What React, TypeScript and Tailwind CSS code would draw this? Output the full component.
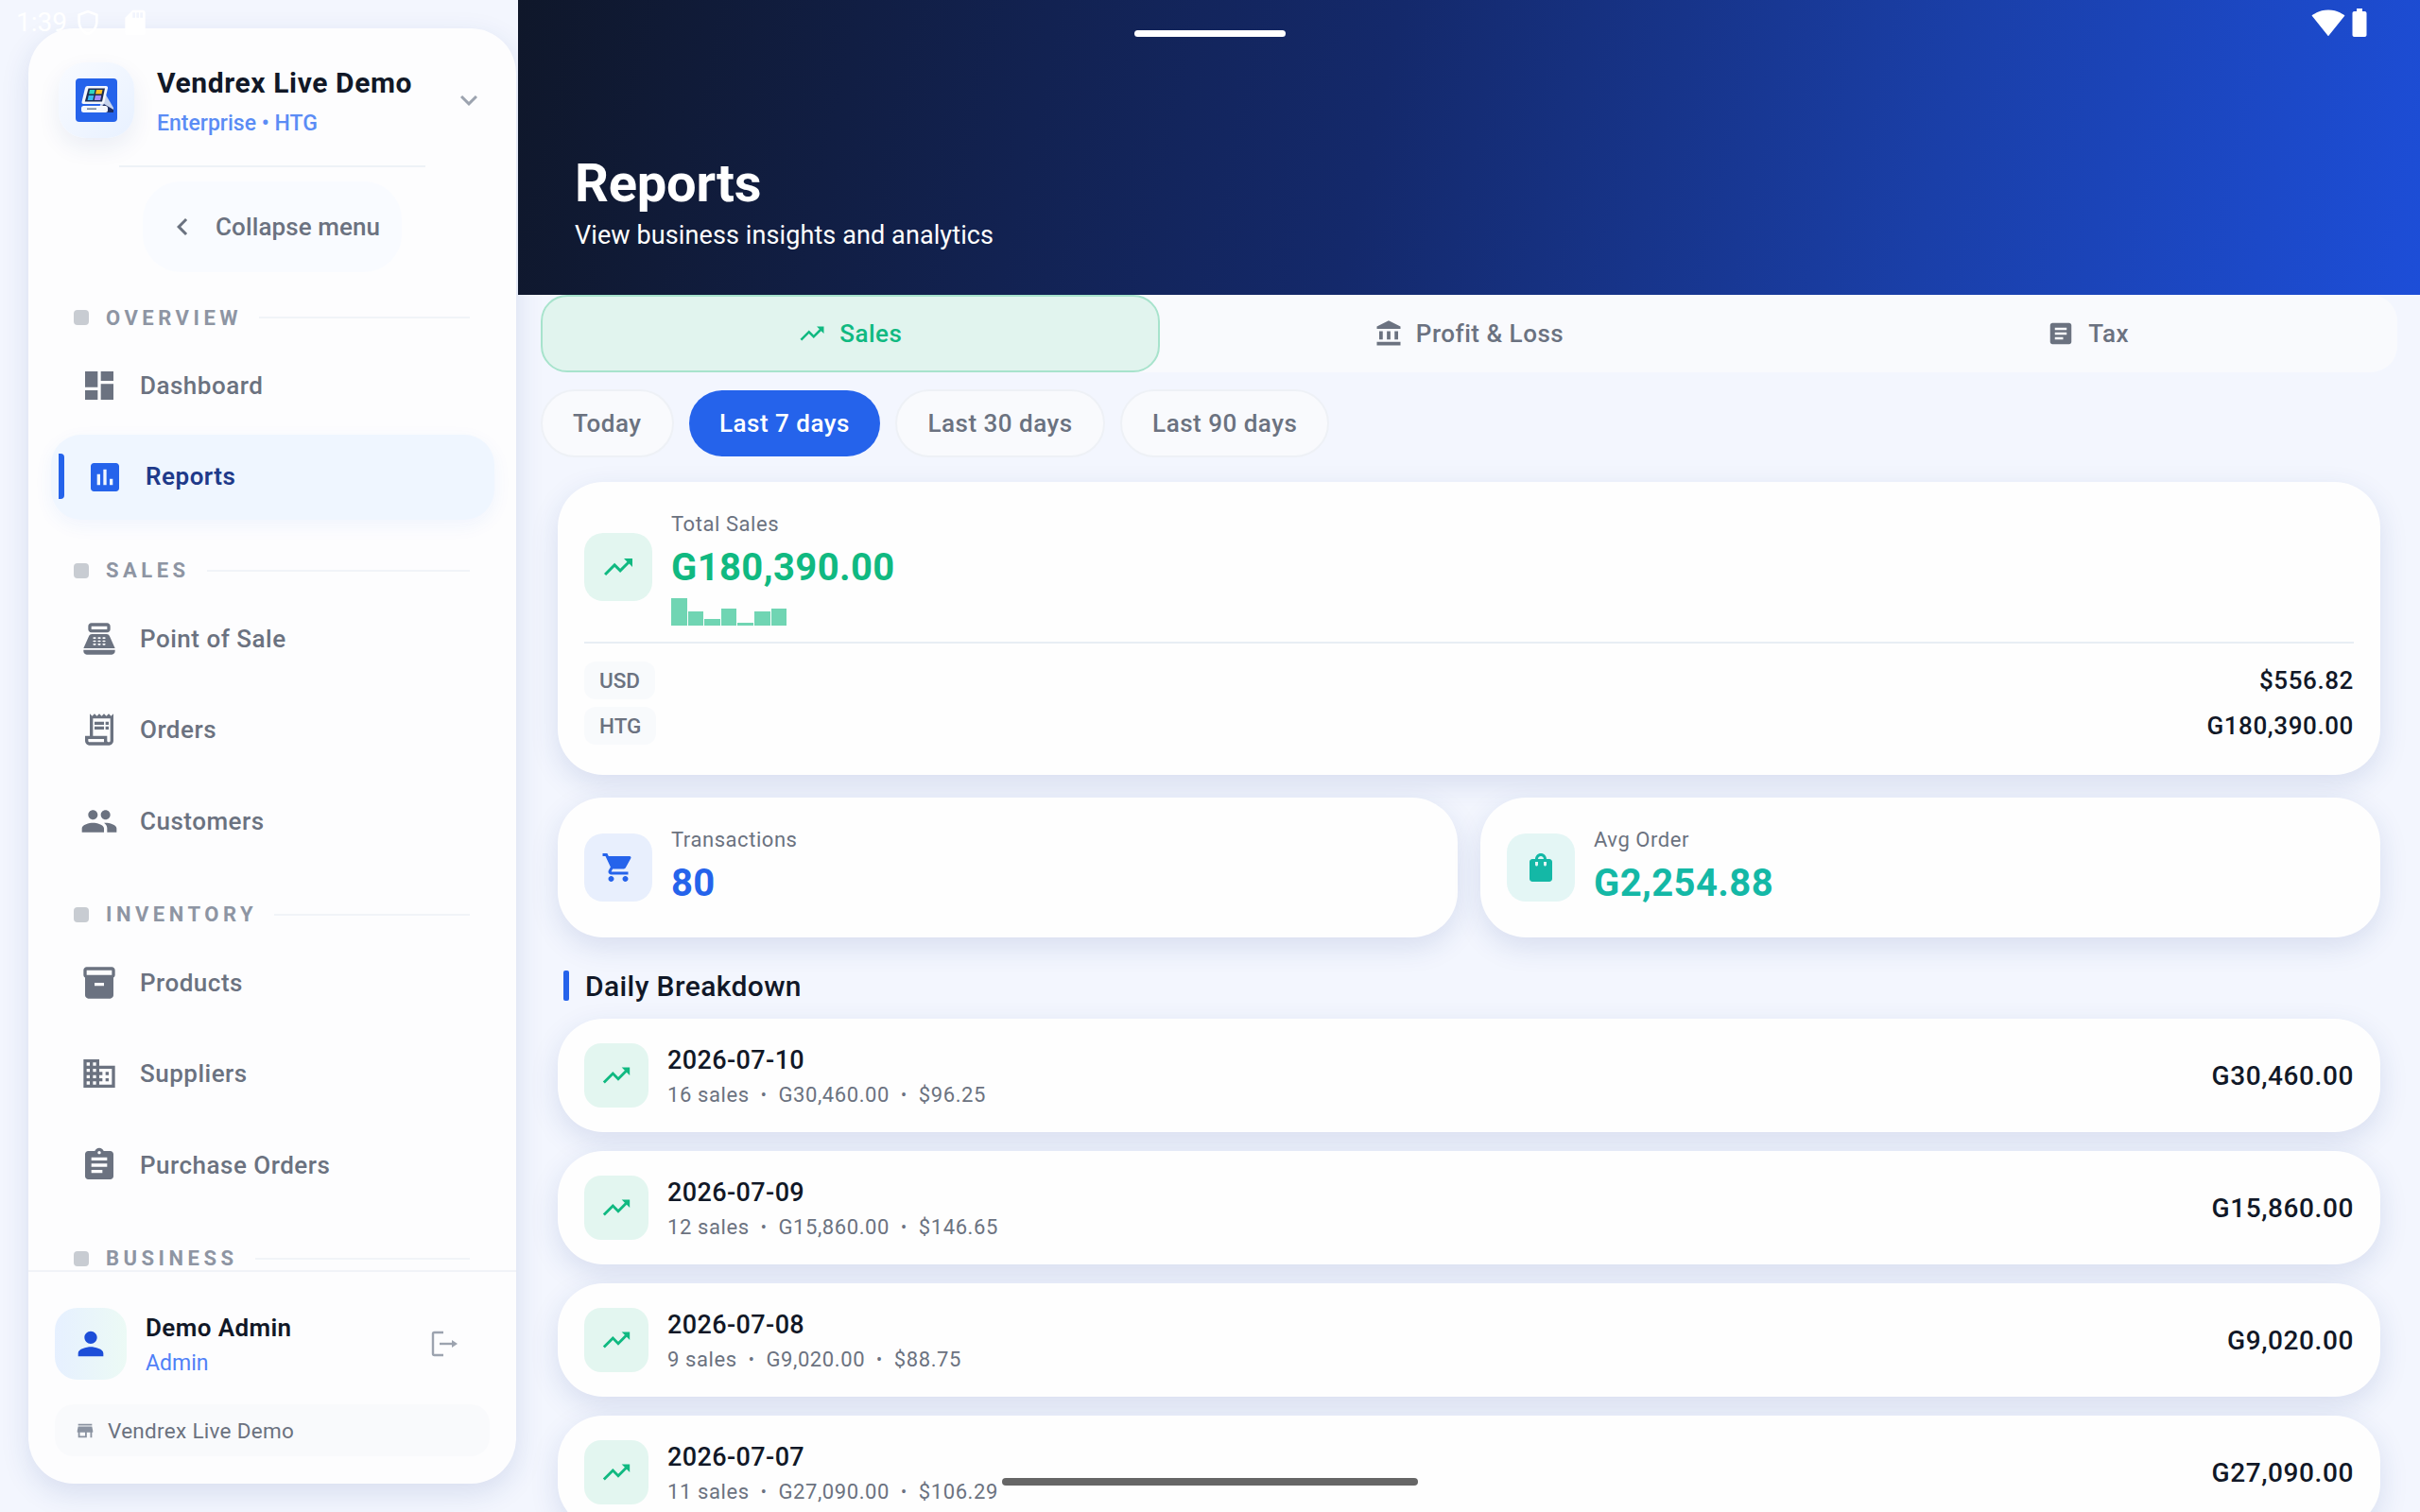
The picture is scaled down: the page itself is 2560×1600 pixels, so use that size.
import React from "react";
import {
  MdDashboard, MdAssessment, MdPointOfSale, MdOutlineReceiptLong, MdPeople, MdInventory2, MdOutlineDomain, MdAssignment,
  MdTrendingUp, MdAccountBalance, MdArticle, MdShoppingCart, MdShoppingBag, MdPerson, MdStore, MdKeyboardArrowDown, MdChevronLeft,
  MdSignalWifi4Bar, MdBatteryFull, MdOutlineShield, MdSdCard,
} from "react-icons/md";

function Logo() {
  return (
    <svg width="44" height="46" viewBox="0 0 44 46">
      <rect width="44" height="46" rx="4" fill="#2563eb" />
      <path d="M30 14 L40 31 L40 35 L24 35 Z" fill="#c7d4ee" />
      <path d="M30 27 L40 33 L40 36 L22 36 Z" fill="#1e2f66" />
      <path d="M12.5 8 H32 Q34.5 8 34 10.5 L30.5 25 Q30 27 28 27 H8.5 Q6 27 6.6 24.5 L10 10 Q10.5 8 12.5 8 Z" fill="#f4f7fd" />
      <path d="M13.5 10.5 H31 L28 24.5 H9.8 Z" fill="#1b2b52" />
      <path d="M15 12 H20.5 L19.6 16.5 H14 Z" fill="#2dd4bf" />
      <path d="M22 12 H28.5 L27.5 16.5 H21 Z" fill="#fbbf24" />
      <path d="M13.7 18 H19.3 L18.3 23 H12.6 Z" fill="#38bdf8" />
      <path d="M20.8 18 H27.2 L26.2 23 H19.8 Z" fill="#a78bfa" />
      <rect x="6" y="29" width="28" height="7" rx="2.5" fill="#f4f7fd" />
      <rect x="12" y="31.5" width="10" height="1.4" fill="#64748b" />
    </svg>
  );
}

const sections = [
  { title: "OVERVIEW", items: [
    { label: "Dashboard", icon: MdDashboard },
    { label: "Reports", icon: MdAssessment, active: true },
  ]},
  { title: "SALES", items: [
    { label: "Point of Sale", icon: MdPointOfSale },
    { label: "Orders", icon: MdOutlineReceiptLong },
    { label: "Customers", icon: MdPeople },
  ]},
  { title: "INVENTORY", items: [
    { label: "Products", icon: MdInventory2 },
    { label: "Suppliers", icon: MdOutlineDomain },
    { label: "Purchase Orders", icon: MdAssignment },
  ]},
  { title: "BUSINESS", items: [] as { label: string; icon: typeof MdPeople; active?: boolean }[] },
];

function NavItem({ label, icon: Icon, active }: { label: string; icon: typeof MdPeople; active?: boolean }) {
  if (active) {
    return (
      <div className="relative ml-[24px] mr-[23px] flex h-[90px] shrink-0 items-center gap-[23px] rounded-[32px] bg-[#eff6ff] pl-[37px] shadow-[0_6px_20px_rgba(37,99,235,0.06)]">
        <div className="absolute left-[8px] top-[20px] h-[48px] w-[6px] rounded-r-[4px] bg-[#2563eb]" />
        <Icon className="text-[#2563eb]" size={40} />
        <span className="text-[26px] font-semibold tracking-[0.5px] text-[#1e3a8a]">{label}</span>
      </div>
    );
  }
  return (
    <div className="ml-[24px] mr-[23px] flex h-[90px] shrink-0 items-center gap-[23px] pl-[31px]">
      <Icon className="text-[#6b7280]" size={40} />
      <span className="mt-[1px] text-[26px] font-medium tracking-[0.5px] text-[#6b7280]">{label}</span>
    </div>
  );
}

function Sidebar() {
  return (
    <div className="w-[548px] shrink-0 pb-[30px] pl-[30px] pr-[2px] pt-[30px]">
      <div className="flex h-full flex-col overflow-hidden rounded-[48px] bg-[#fdfdfe] shadow-[0_10px_30px_rgba(30,58,138,0.13)]">
        <div className="mt-[36px] flex h-[80px] shrink-0 items-center pl-[32px] pr-[32px]">
          <div className="flex h-[80px] w-[80px] shrink-0 items-center justify-center rounded-[28px] bg-gradient-to-br from-[#f9fbff] to-[#e8f1ff] shadow-[0_10px_24px_rgba(30,58,138,0.08)]">
            <Logo />
          </div>
          <div className="ml-[24px] flex-1 pt-[2px]">
            <div className="text-[30px] font-bold leading-[40px] tracking-[0.6px] text-[#111827]">Vendrex Live Demo</div>
            <div className="mt-[7px] text-[23px] font-medium leading-[32px] text-[#5b8cf5]">Enterprise • HTG</div>
          </div>
          <MdKeyboardArrowDown className="text-[#9ca3af]" size={36} />
        </div>
        <div className="mx-[96px] mt-[29px] h-[2px] shrink-0 bg-[#eef2f7]" />
        <div className="mx-auto mt-[15px] flex h-[96px] w-[274px] shrink-0 items-center rounded-[40px] bg-[#f9fbff] pl-[24px]">
          <MdChevronLeft className="text-[#6b7280]" size={36} />
          <span className="ml-[17px] text-[26px] font-medium tracking-[0.1px] text-[#6b7280]">Collapse menu</span>
        </div>
        <div className="mt-[36px] flex min-h-0 flex-1 flex-col overflow-hidden">
          {sections.map((s) => (
            <div key={s.title} className="mb-[42px] flex shrink-0 flex-col">
              <div className="mb-[15px] flex h-[24px] items-center pl-[48px] pr-[49px]">
                <div className="h-[16px] w-[16px] rounded-[4px] bg-[#c8ccd2]" />
                <span className="ml-[18px] text-[22px] font-bold tracking-[4.5px] text-[#8e95a3]">{s.title}</span>
                <div className="ml-[18px] h-[2px] flex-1 bg-[#f1f4f8]" />
              </div>
              <div className="flex flex-col gap-[6.5px]">
                {s.items.map((it) => <NavItem key={it.label} {...it} />)}
              </div>
            </div>
          ))}
        </div>
        <div className="shrink-0 border-t-2 border-[#f1f3f8] px-[28px] pb-[29px] pt-[38px]">
          <div className="flex h-[76px] items-center">
            <div className="flex h-[76px] w-[76px] shrink-0 items-center justify-center rounded-[24px] bg-gradient-to-r from-[#e6f0ff] to-[#ecfaf5]">
              <MdPerson className="text-[#1d4ed8]" size={40} />
            </div>
            <div className="ml-[20px] flex-1 pt-[3px]">
              <div className="text-[26px] font-semibold leading-[34px] tracking-[0.4px] text-[#111827]">Demo Admin</div>
              <div className="mt-[5px] text-[23px] font-normal leading-[32px] text-[#4f80f7]">Admin</div>
            </div>
            <svg className="mr-[34px]" width="28" height="28" viewBox="0 0 28 28" fill="none" stroke="#9ca3af" strokeWidth="2.4">
              <path d="M13 2 H3.5 Q2 2 2 3.5 V24.5 Q2 26 3.5 26 H13" />
              <path d="M9 14 H23" />
              <path d="M22 10 L28 14 L22 18 Z" fill="#9ca3af" stroke="none" />
            </svg>
          </div>
          <div className="mt-[26px] flex h-[55px] items-center rounded-[20px] bg-[#f9fafc] pl-[21px]">
            <MdStore className="text-[#8b93a1]" size={22} />
            <span className="ml-[13px] mt-[3px] text-[22.5px] tracking-[0.3px] text-[#6b7280]">Vendrex Live Demo</span>
          </div>
        </div>
      </div>
    </div>
  );
}

function Tab({ label, icon: Icon, active }: { label: string; icon: typeof MdPeople; active?: boolean }) {
  return (
    <div className={active
      ? "flex items-center justify-center gap-[14px] rounded-[28px] border-2 border-[#a7e3cc] bg-[#e1f4ee] text-[#10b981]"
      : "flex items-center justify-center gap-[14px] text-[#6b7280]"}>
      <Icon size={30} />
      <span className="text-[26px] font-medium tracking-[0.5px]">{label}</span>
    </div>
  );
}

function Pill({ label, active }: { label: string; active?: boolean }) {
  return (
    <div className={active
      ? "flex h-[70px] items-center rounded-full bg-[#2563eb] px-[32px] text-[26px] font-medium tracking-[0.5px] text-white"
      : "flex h-[72px] items-center rounded-full border-2 border-[#eef1f6] bg-[#f9fafd] px-[32px] text-[26px] font-medium tracking-[0.5px] text-[#6b7280]"}>
      {label}
    </div>
  );
}

const cardShadow = "shadow-[0_10px_30px_rgba(30,58,138,0.13)]";

function Stat({ label, value, color, bg, icon: Icon, iconColor }: { label: string; value: string; color: string; bg: string; icon: typeof MdPeople; iconColor: string }) {
  return (
    <div className="flex h-[148px] flex-1 items-center gap-[20px] rounded-[48px] bg-[#fefefe] px-[28px] shadow-[0_10px_30px_rgba(30,58,138,0.13)]">
      <div className={"flex h-[72px] w-[72px] items-center justify-center rounded-[20px] " + bg}>
        <Icon className={iconColor} size={36} />
      </div>
      <div className="flex flex-col pb-[5px]">
        <div className="text-[22px] leading-[32px] tracking-[0.55px] text-[#6b7280]">{label}</div>
        <div className={"mt-[6px] text-[40px] font-bold leading-[48px] tracking-[0.4px] " + color}>{value}</div>
      </div>
    </div>
  );
}

const bars = [29, 15, 7, 18, 3.5, 15, 18];

const rows = [
  { date: "2026-07-10", a: "16 sales", b: "G30,460.00", c: "$96.25", total: "G30,460.00" },
  { date: "2026-07-09", a: "12 sales", b: "G15,860.00", c: "$146.65", total: "G15,860.00" },
  { date: "2026-07-08", a: "9 sales", b: "G9,020.00", c: "$88.75", total: "G9,020.00" },
  { date: "2026-07-07", a: "11 sales", b: "G27,090.00", c: "$106.29", total: "G27,090.00" },
];

function Main() {
  return (
    <div className="flex min-w-0 flex-1 flex-col overflow-hidden">
      <div className="flex h-[312px] shrink-0 flex-col justify-end bg-[linear-gradient(102deg,#0f172a_0%,#14296b_45%,#1a3fa8_74%,#1d4ed8_100%)] pb-[45px] pl-[60px]">
        <div className="text-[56px] font-bold leading-[68px] tracking-[-0.2px] text-white">Reports</div>
        <div className="mt-[3px] text-[27px] leading-[36px] tracking-[0.1px] text-white">View business insights and analytics</div>
      </div>
      <div className="mx-[24px] grid h-[82px] shrink-0 grid-cols-3 rounded-[28px] bg-[#f9fafd]">
        <Tab label="Sales" icon={MdTrendingUp} active />
        <Tab label="Profit & Loss" icon={MdAccountBalance} />
        <Tab label="Tax" icon={MdArticle} />
      </div>
      <div className="mx-[24px] mt-[18px] flex shrink-0 items-center gap-[16.5px]">
        <Pill label="Today" />
        <Pill label="Last 7 days" active />
        <Pill label="Last 30 days" />
        <Pill label="Last 90 days" />
      </div>
      <div className="mx-[42px] mt-[26px] flex shrink-0 flex-col">
        <div className={"rounded-[48px] bg-[#fefefe] px-[28px] pb-[32px] pt-[28px] " + cardShadow}>
          <div className="flex items-center gap-[20px]">
            <div className="flex h-[72px] w-[72px] items-center justify-center rounded-[20px] bg-[#e3f6f0]">
              <MdTrendingUp className="text-[#10b981]" size={36} />
            </div>
            <div className="flex flex-col">
              <div className="mt-[1px] text-[22px] leading-[32px] tracking-[0.55px] text-[#6b7280]">Total Sales</div>
              <div className="mt-[6px] text-[40px] font-bold leading-[48px] tracking-[0.4px] text-[#10b981]">G180,390.00</div>
              <div className="mt-[8px] flex h-[29px] items-end gap-[1px]">
                {bars.map((h, i) => (
                  <div key={i} className="w-[16.6px] bg-[#70d5b3]" style={{ height: h }} />
                ))}
              </div>
            </div>
          </div>
          <div className="mt-[17px] h-[2px] bg-[#e8eef4]" />
          <div className="mt-[19px] flex flex-col gap-[8px]">
            <div className="flex h-[40px] items-center justify-between">
              <span className="flex h-[40px] items-center rounded-[12px] bg-[#f8fafc] px-[16px] pt-[2px] text-[22.5px] font-medium text-[#6b7280]">USD</span>
              <span className="mt-[1px] text-[26px] font-medium tracking-[0.6px] text-[#111827]">$556.82</span>
            </div>
            <div className="flex h-[40px] items-center justify-between">
              <span className="flex h-[40px] items-center rounded-[12px] bg-[#f8fafc] px-[16px] pt-[2px] text-[22.5px] font-medium text-[#6b7280]">HTG</span>
              <span className="mt-[1px] text-[26px] font-medium tracking-[0.6px] text-[#111827]">G180,390.00</span>
            </div>
          </div>
        </div>
        <div className="mt-[24px] flex gap-[24px]">
          <Stat label="Transactions" value="80" color="text-[#2563eb]" bg="bg-[#e8effd]" icon={MdShoppingCart} iconColor="text-[#2563eb]" />
          <Stat label="Avg Order" value="G2,254.88" color="text-[#14b8a6]" bg="bg-[#e4f6f5]" icon={MdShoppingBag} iconColor="text-[#14b8a6]" />
        </div>
        <div className="ml-[6px] mt-[35px] flex h-[32px] items-center gap-[17px]">
          <div className="h-[32px] w-[6px] rounded-[2px] bg-[#2563eb]" />
          <span className="text-[30px] font-medium tracking-[0.4px] text-[#111827]">Daily Breakdown</span>
        </div>
        <div className="mt-[19px] flex flex-col gap-[20px]">
          {rows.map((r) => (
            <div key={r.date} className={"flex h-[120px] shrink-0 items-center rounded-[48px] bg-[#fefefe] px-[28px] " + cardShadow}>
              <div className="flex h-[68px] w-[68px] items-center justify-center rounded-[18px] bg-[#e3f6f0]">
                <MdTrendingUp className="text-[#10b981]" size={34} />
              </div>
              <div className="ml-[20px] flex flex-1 flex-col pt-[2px]">
                <div className="text-[27px] font-medium leading-[34px] tracking-[0.4px] text-[#111827]">{r.date}</div>
                <div className="mt-[5px] flex items-center text-[22px] leading-[30px] tracking-[0.6px] text-[#6b7280]">
                  <span>{r.a}</span>
                  <span className="mx-[12px] text-[18px]">•</span>
                  <span>{r.b}</span>
                  <span className="mx-[12px] text-[18px]">•</span>
                  <span>{r.c}</span>
                </div>
              </div>
              <div className="mt-[2px] text-[28px] font-medium tracking-[0.6px] text-[#111827]">{r.total}</div>
            </div>
          ))}
        </div>
      </div>
    </div>
  );
}

export default function App() {
  return (
    <div className="relative flex h-[1600px] w-[2560px] overflow-hidden bg-[#f3f6fe] font-['Roboto',sans-serif]">
      <Sidebar />
      <Main />
      <div className="absolute left-[17px] top-[6px] flex items-center text-white">
        <span className="text-[28px] leading-[36px]">1:39</span>
        <MdOutlineShield className="ml-[6px]" size={32} />
        <MdSdCard className="ml-[18px]" size={32} />
      </div>
      <div className="absolute left-[1200px] top-[32px] h-[7px] w-[160px] rounded-full bg-white" />
      <div className="absolute right-[46px] top-[6px] flex items-center text-white">
        <MdSignalWifi4Bar size={36} />
        <MdBatteryFull className="-ml-[3px]" size={36} />
      </div>
      <div className="absolute left-[1060px] top-[1564px] h-[8px] w-[440px] rounded-full bg-[#666666]" />
    </div>
  );
}
